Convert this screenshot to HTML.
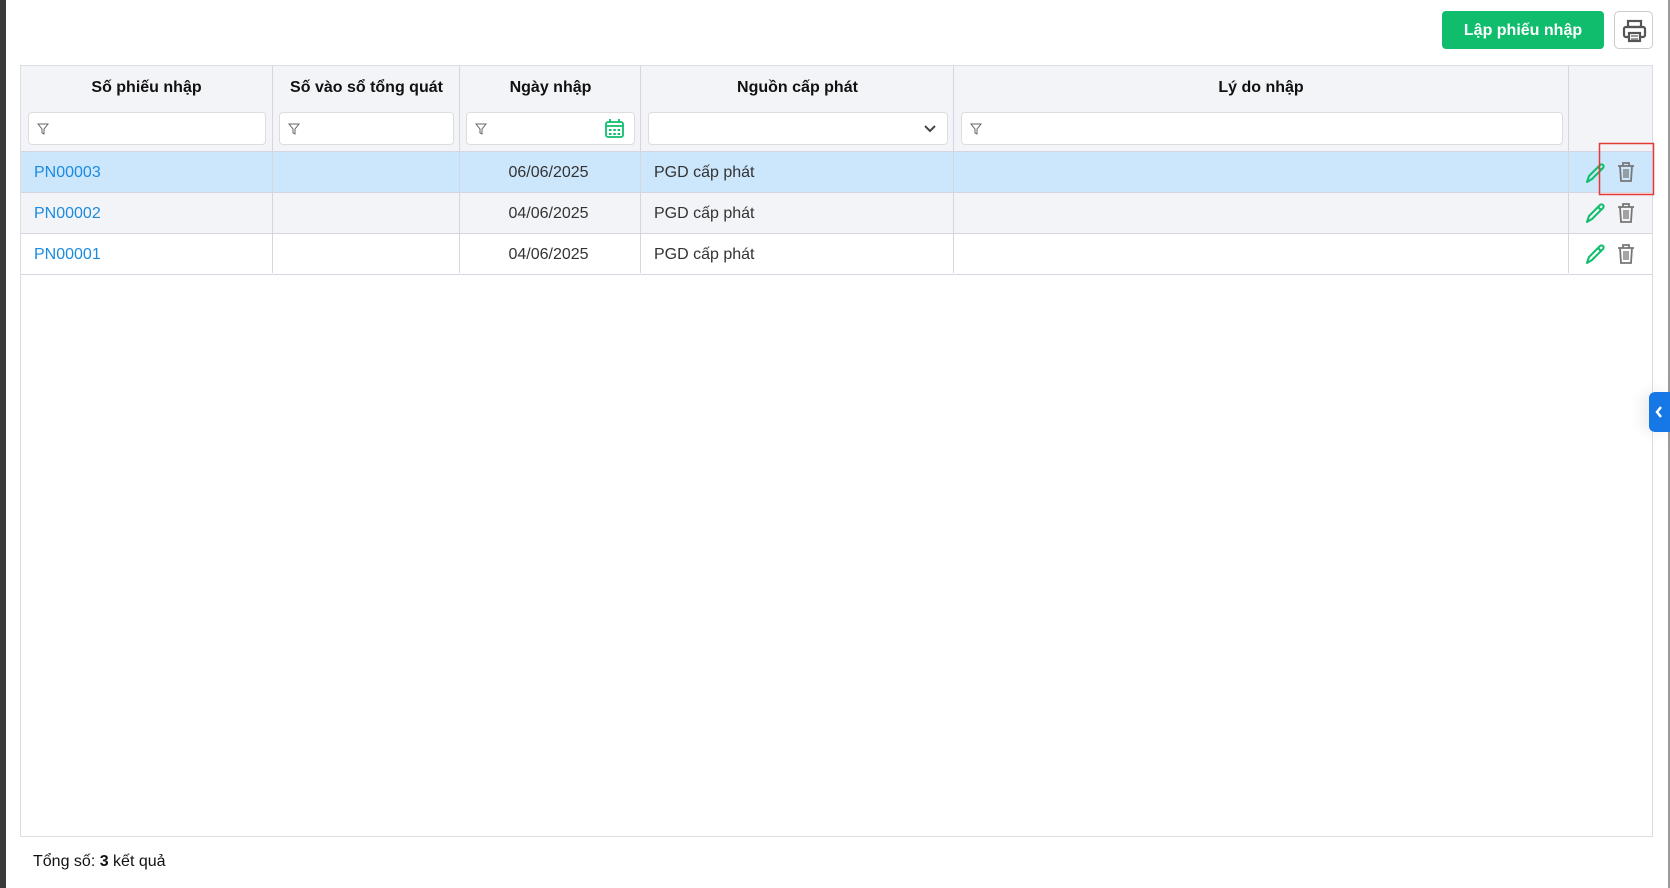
<!DOCTYPE html>
<html><head><meta charset="utf-8"><style>
*{box-sizing:border-box;margin:0;padding:0}
body{width:1670px;height:888px;background:#fff;font-family:"Liberation Sans",sans-serif;position:relative;overflow:hidden;color:#222}
.strip{position:absolute;left:0;top:0;width:6px;height:888px;background:#3a3a3a}
.rline{position:absolute;left:1668px;top:0;width:2px;height:888px;background:#9a9a9a}
.btn{position:absolute;left:1442px;top:11px;width:162px;height:38px;background:#0fbd6d;border-radius:4px;color:#fff;font-weight:bold;font-size:16px;text-align:center;line-height:39px}
.pbtn{position:absolute;left:1614px;top:11px;width:39px;height:38px;border:1px solid #ccc;border-radius:5px;background:#fff}
.tbl{position:absolute;left:20px;top:65px;width:1633px;height:772px;border:1px solid #dcdde3}
.head{position:absolute;left:0;top:0;width:1631px;height:86px;background:#f3f4f8;border-bottom:1px solid #d5d6e2}
.vl{position:absolute;top:0;width:1px;height:207px;background:#d5d6e2}
.th{position:absolute;top:13px;font-weight:bold;font-size:16px;text-align:center;color:#111}
.inp{position:absolute;top:46px;height:33px;background:#fff;border:1px solid #ddd;border-radius:4px}
.row{position:absolute;left:0;width:1631px;height:41px;border-bottom:1px solid #d5d6e2;font-size:16px;line-height:42px;color:#333}
.c{position:absolute;top:0}
.link{color:#1a8be0}
</style></head><body>
<div class="strip"></div><div class="rline"></div>
<div class="btn">Lập phiếu nhập</div>
<div class="pbtn"><svg width="39" height="38" viewBox="0 0 39 38"><g fill="none" stroke="#555" stroke-width="2.2"><rect x="13" y="9" width="13" height="6"/><rect x="9" y="15" width="21" height="10" rx="2"/><rect x="14" y="21" width="11" height="8" fill="#fff"/><line x1="16" y1="24" x2="23" y2="24" stroke-width="1.2"/><line x1="16" y1="27" x2="23" y2="27" stroke-width="1.2"/></g></svg></div>
<div class="tbl">
<div class="head">
<div class="th" style="left:0;width:251px">Số phiếu nhập</div>
<div class="th" style="left:252px;width:187px">Số vào sổ tổng quát</div>
<div class="th" style="left:439px;width:181px">Ngày nhập</div>
<div class="th" style="left:620px;width:313px">Nguồn cấp phát</div>
<div class="th" style="left:933px;width:614px">Lý do nhập</div>
<div class="inp" style="left:7px;width:238px"><svg style="position:absolute;left:8px;top:10px" width="12" height="12" viewBox="0 0 12 12"><path d="M1 1h10L7 6v5l-2-1V6z" fill="none" stroke="#666"/></svg></div>
<div class="inp" style="left:258px;width:175px"><svg style="position:absolute;left:8px;top:10px" width="12" height="12" viewBox="0 0 12 12"><path d="M1 1h10L7 6v5l-2-1V6z" fill="none" stroke="#666"/></svg></div>
<div class="inp" style="left:445px;width:169px"><svg style="position:absolute;left:8px;top:10px" width="12" height="12" viewBox="0 0 12 12"><path d="M1 1h10L7 6v5l-2-1V6z" fill="none" stroke="#666"/></svg><svg style="position:absolute;left:137px;top:5px" width="21" height="21" viewBox="0 0 21 21"><g fill="none" stroke="#0fbd6d" stroke-width="1.8"><rect x="2" y="4" width="17" height="15" rx="2"/><line x1="2" y1="8" x2="19" y2="8"/><line x1="6" y1="1" x2="6" y2="5"/><line x1="15" y1="1" x2="15" y2="5"/></g><g fill="#0fbd6d"><rect x="5" y="11" width="2.5" height="2"/><rect x="9.3" y="11" width="2.5" height="2"/><rect x="13.6" y="11" width="2.5" height="2"/><rect x="5" y="15" width="2.5" height="2"/><rect x="9.3" y="15" width="2.5" height="2"/><rect x="13.6" y="15" width="2.5" height="2"/></g></svg></div>
<div class="inp" style="left:627px;width:300px"><svg style="position:absolute;left:274px;top:10px" width="14" height="12" viewBox="0 0 14 12"><path d="M2 3l5 5 5-5" fill="none" stroke="#444" stroke-width="2"/></svg></div>
<div class="inp" style="left:940px;width:602px"><svg style="position:absolute;left:8px;top:10px" width="12" height="12" viewBox="0 0 12 12"><path d="M1 1h10L7 6v5l-2-1V6z" fill="none" stroke="#666"/></svg></div>
</div>
<div class="row" style="top:86px;background:#cce6fb"><div class="c link" style="left:13px">PN00003</div><div class="c" style="left:437px;width:181px;text-align:center">06/06/2025</div><div class="c" style="left:633px">PGD cấp phát</div></div>
<div class="row" style="top:127px;background:#f3f4f8"><div class="c link" style="left:13px">PN00002</div><div class="c" style="left:437px;width:181px;text-align:center">04/06/2025</div><div class="c" style="left:633px">PGD cấp phát</div></div>
<div class="row" style="top:168px;background:#fff"><div class="c link" style="left:13px">PN00001</div><div class="c" style="left:437px;width:181px;text-align:center">04/06/2025</div><div class="c" style="left:633px">PGD cấp phát</div></div>
<div class="vl" style="left:251px"></div><div class="vl" style="left:438px"></div><div class="vl" style="left:619px"></div><div class="vl" style="left:932px"></div><div class="vl" style="left:1547px"></div>
</div>
<svg style="position:absolute;left:0;top:0" width="1670" height="888">
<defs><g id="pen"><path d="M3 21l2-6L16 4a2 2 0 013 3L8 18z M14 6l3 3" fill="none" stroke="#0fbd6d" stroke-width="2" stroke-linejoin="round"/></g>
<g id="bin" fill="none" stroke="#777" stroke-width="1.8"><path d="M3 6h16M8 6V3h6v3M5 6l1 15h10l1-15"/><path d="M9 9v9M11 9v9M13 9v9" stroke-width="1.3"/></g></defs>
<use href="#pen" x="1584" y="161"/><use href="#bin" x="1615" y="160"/>
<use href="#pen" x="1584" y="201"/><use href="#bin" x="1615" y="201"/>
<use href="#pen" x="1584" y="242"/><use href="#bin" x="1615" y="242"/>
<rect x="1599.5" y="143.5" width="54" height="51" fill="none" stroke="#e53935" stroke-width="1.5"/>
</svg>
<div style="position:absolute;left:1649px;top:392px;width:21px;height:40px;background:#1677e6;border-radius:6px 0 0 6px;box-shadow:-6px 0 14px rgba(0,0,0,.08)"><svg width="21" height="40"><path d="M12 15l-4 5 4 5" fill="none" stroke="#fff" stroke-width="2.5"/></svg></div>
<div style="position:absolute;left:33px;top:853px;font-size:16px;color:#111">Tổng số: <b>3</b> kết quả</div>
</body></html>
